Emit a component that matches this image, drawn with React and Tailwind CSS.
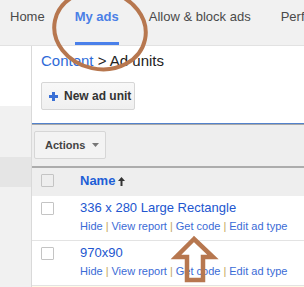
import React from "react";

const tabs = [
  { label: "Home" },
  { label: "My ads", active: true },
  { label: "Allow & block ads" },
  { label: "Performance reports" },
];

const rows = [
  { name: "336 x 280 Large Rectangle" },
  { name: "970x90" },
];

const links = ["Hide", "View report", "Get code", "Edit ad type"];

function Checkbox() {
  return <div className="w-[13px] h-[13px] shrink-0 border border-[#c4c4c4] rounded-[1px]" />;
}

function AdRow({ name }) {
  return (
    <div className="h-[45px] flex items-start pl-[9px] border-b border-[#e3e3e3] bg-white">
      <div className="mt-[6px]">
        <Checkbox />
      </div>
      <div className="ml-[26px] pt-[4px] whitespace-nowrap">
        <div className="text-[13px] leading-[16px] text-[#2256cf]">{name}</div>
        <div className="mt-[3px] text-[11px] leading-[14px] text-[#3a6bd6]">
          {links.map((l, i) => (
            <span key={l}>
              {i > 0 && <span className="text-[#c4a65e] mx-[3px]">|</span>}
              {l}
            </span>
          ))}
        </div>
      </div>
    </div>
  );
}

export default function App() {
  return (
    <div className="relative w-[304px] h-[287px] overflow-hidden bg-white font-['Liberation_Sans',Arial,sans-serif]">
      {/* top tabs, last one runs past the window edge */}
      <nav className="h-[46px] bg-[#f1f1f1] border-b border-[#e2e2e2] flex pl-[10px] gap-[30px] text-[13px] overflow-hidden">
        {tabs.map((t) => (
          <div key={t.label} className="h-full shrink-0 flex flex-col justify-between whitespace-nowrap">
            <span
              className={`pt-[9px] leading-[15px] ${t.active ? "font-bold text-[#4a7fe6]" : "text-[#4a4a4a]"}`}
            >
              {t.label}
            </span>
            {t.active ? <div className="h-[3px] bg-[#4a80ea]" /> : null}
          </div>
        ))}
      </nav>

      <div className="flex h-[241px]">
        {/* left rail */}
        <aside className="w-[32px] shrink-0 border-r border-[#d9d9d9] bg-[#f1f1f1] flex flex-col">
          <div className="h-[60px] bg-white" />
          <div className="h-[51px]" />
          <div className="h-[30px] bg-[#e5e5e5]" />
        </aside>

        <main className="flex-1 min-w-0">
          <div className="pt-[6px] pl-[9px] text-[15px] leading-[18px] whitespace-nowrap">
            <span className="text-[#2f6bd8]">Content</span>
            <span className="text-[#222]"> &gt; Ad units</span>
          </div>

          <div className="mt-[12px] ml-[9px] w-[94px] h-[28px] flex items-center pl-[7px] gap-[6px] border border-[#d6d6d6] rounded-[2px] bg-gradient-to-b from-[#f8f8f8] to-[#f0f0f0]">
            <svg width="9" height="9" viewBox="0 0 9 9">
              <rect x="3" y="0" width="3" height="9" fill="#3a70d6" />
              <rect x="0" y="3" width="9" height="3" fill="#3a70d6" />
            </svg>
            <span className="text-[12px] font-bold text-[#333] whitespace-nowrap">New ad unit</span>
          </div>

          <div className="mt-[13px] h-px bg-[#5282cc]" />
          <div className="h-px bg-[#a9a9a9]" />

          {/* toolbar */}
          <div className="h-[41px] bg-[#eeeeee] pt-[6px] pl-[2px]">
            <div className="w-[72px] h-[28px] flex items-center pl-[10px] border border-[#d6d6d6] rounded-[2px] bg-[#f3f3f3]">
              <span className="text-[11px] font-bold text-[#444]">Actions</span>
              <svg className="ml-[7px]" width="7" height="4" viewBox="0 0 7 4">
                <path d="M0 0h7L3.5 4z" fill="#777" />
              </svg>
            </div>
          </div>
          <div className="h-[2px] bg-[#acacac]" />

          {/* header */}
          <div className="h-[28px] bg-[#eeeeee] flex items-start pl-[9px]">
            <div className="mt-[6px]">
              <Checkbox />
            </div>
            <div className="ml-[26px] pt-[5px] flex items-center gap-[3px]">
              <span className="text-[13px] leading-[16px] font-bold text-[#1e5fd6]">Name</span>
              <svg width="7" height="9" viewBox="0 0 7 9">
                <path d="M3.5 0L7 4H4.5v5h-2V4H0z" fill="#333" />
              </svg>
            </div>
          </div>

          {rows.map((r) => (
            <AdRow key={r.name} name={r.name} />
          ))}
          <div className="h-[10px] bg-[#fffbe6]" />
        </main>
      </div>

      {/* annotation marks drawn over the screenshot */}
      <svg className="absolute inset-0 pointer-events-none" width="304" height="287" viewBox="0 0 304 287">
        <ellipse
          cx="100"
          cy="30"
          rx="46"
          ry="39"
          transform="rotate(12 100 30)"
          fill="none"
          stroke="#b7774f"
          strokeWidth="4"
        />
        <polygon
          points="194,239 176,257 187,257 187,280 203,280 203,257 213,257"
          fill="none"
          stroke="#b7774f"
          strokeWidth="4.5"
          strokeLinejoin="miter"
        />
      </svg>
    </div>
  );
}
